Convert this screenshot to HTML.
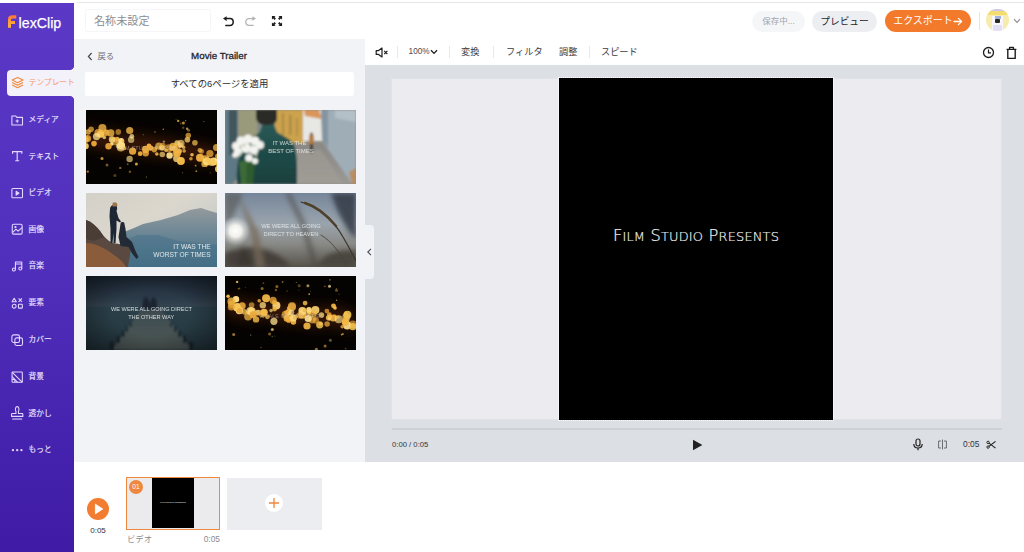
<!DOCTYPE html>
<html lang="ja">
<head>
<meta charset="utf-8">
<title>FlexClip</title>
<style>
*{box-sizing:border-box;margin:0;padding:0}
html,body{width:1024px;height:552px;overflow:hidden;background:#fff;font-family:"Liberation Sans","Noto Sans CJK JP",sans-serif;color:#222}
.abs{position:absolute}
#topline{left:77px;top:0;width:947px;height:3px;background:#fff;border-bottom:1px solid #e6e6e8}
#side{left:0;top:2.7px;width:74px;height:550px;background:linear-gradient(180deg,#5b39c6 0%,#5130bd 45%,#3f1ba5 100%)}
#logo{left:0;top:0;width:74px;height:36px}
.nav{position:absolute;left:0;width:74px;height:26px;color:#e9e2ff;font-size:7.7px;line-height:26px;white-space:nowrap;-webkit-text-stroke:0.15px currentColor}
.nav svg{position:absolute;left:10.6px;top:6.9px;width:12.4px;height:12.4px;overflow:visible}
.nav span{position:absolute;left:28.6px;top:0.3px}
.nav.active{left:7px;width:67px;height:26.6px;line-height:26.6px;background:#f3f1fa;border-radius:4px 0 0 4px;color:#f5a97f}
.nav.active svg{left:3.8px;top:6.4px;width:13.2px;height:13.2px}
.nav.active span{left:21.8px}
#header{left:74px;top:3px;width:950px;height:36px;background:#fff}
#name{left:85px;top:9px;width:126px;height:23px;border:1px solid #f6f6f8;border-radius:2px;font-size:11.1px;line-height:23px;padding-left:8px;color:#8d8d90}
#panel{left:74px;top:39px;width:291px;height:423.4px;background:#f1f3f7}
#editor{left:365px;top:39px;width:659px;height:423.4px;background:#dcdfe3}
#toolbar{left:365px;top:39px;width:659px;height:26px;background:#fff}
#stage{left:392px;top:79px;width:609px;height:339.6px;background:#ececf0;outline:1px dotted rgba(255,255,255,.2)}
#video{left:559px;top:78px;width:274px;height:341.6px;background:#000;outline:1px dotted rgba(255,255,255,.85)}
#timeline{left:74px;top:462px;width:950px;height:90px;background:#fff}
.t{position:absolute;white-space:nowrap}
.pill{border-radius:11px;font-size:8.5px;text-align:center;line-height:21px;white-space:nowrap}
#avatar{left:986px;top:8.5px;width:22.5px;height:22.5px;border-radius:50%;background:#f7ecae;overflow:hidden}
#apply{left:85px;top:72px;width:269px;height:24px;background:#fff;border-radius:2px;text-align:center;font-size:9.4px;line-height:24px;color:#2b2b31}
#handle{left:365px;top:225px;width:8.5px;height:54px;background:#f1f3f7;border-radius:0 4px 4px 0}
.vd{top:46px;width:1px;height:12px;background:#e7e8eb}
.tb{top:46px;font-size:8.6px;line-height:12px;color:#3a3b42}
.tb.j{font-size:9.2px}
#title{left:559px;top:226.4px;width:274px;text-align:center;color:#f2f2f2;font-family:"DejaVu Sans Light","DejaVu Sans","Liberation Sans",sans-serif;font-weight:200;font-size:16.2px;line-height:19px;letter-spacing:0.2px;-webkit-text-stroke:0.2px #f2f2f2}
#title span{font-size:12.9px}
#clip{left:126px;top:477.4px;width:94px;height:52.4px;border:1.5px solid #f0873f;background:#ebebee;overflow:hidden}
.thumb{position:absolute;width:131px;height:74px;background:#222;overflow:hidden}
</style>
</head>
<body>
<div class="abs" id="side">
<svg class="abs" id="logo" viewBox="0 0 74 36"><defs><linearGradient id="lg" x1="0" y1="0" x2="0" y2="1"><stop offset="0" stop-color="#ff6f3f"/><stop offset="0.45" stop-color="#ff9a3a"/><stop offset="1" stop-color="#ffb536"/></linearGradient></defs>
<path d="M8 24.8 V16.2 C8 13.8 9.6 12.2 12 12.2 H16.3 V15.6 H12.6 C11.6 15.6 11 16.2 11 17.2 V18 H15 V21 H11 V24.8 Z" fill="url(#lg)"/>
<text x="18.6" y="24.5" font-family="Liberation Sans, sans-serif" font-size="14.5" fill="#fff" stroke="#fff" stroke-width="0.25" textLength="42.6" lengthAdjust="spacingAndGlyphs">lexClip</text></svg>
<div class="abs" style="left:70px;top:63px;width:4px;height:4px;background:radial-gradient(circle at 0 0,rgba(243,241,250,0) 3.6px,#f3f1fa 4.2px)"></div><div class="abs" style="left:70px;top:93px;width:4px;height:4px;background:radial-gradient(circle at 0 100%,rgba(243,241,250,0) 3.6px,#f3f1fa 4.2px)"></div>
<div class="nav active" style="top:67px"><svg viewBox="0 0 14 14"><g fill="none" stroke="#f08a3c" stroke-width="1.2" stroke-linejoin="round"><path d="M7 1.5 L12.8 4.3 L7 7.1 L1.2 4.3 Z"/><path d="M1.2 7 L7 9.8 L12.8 7"/><path d="M1.2 9.6 L7 12.4 L12.8 9.6"/></g></svg><span>テンプレート</span></div>
<div class="nav" style="top:104.2px"><svg viewBox="0 0 14 14"><g fill="none" stroke="#e3d8ff" stroke-width="1.2" stroke-linejoin="round"><path d="M1 2.2 H5.2 L6.6 3.8 H13 V12.4 H1 Z"/><path d="M5.2 8 H8.8 M7 6.2 V9.8"/></g></svg><span>メディア</span></div>
<div class="nav" style="top:140.7px"><svg viewBox="0 0 14 14"><g fill="none" stroke="#e3d8ff" stroke-width="1.3"><path d="M1.8 4.2 V1.8 H12.2 V4.2 M7 1.8 V12.2 M4.8 12.2 H9.2"/></g></svg><span>テキスト</span></div>
<div class="nav" style="top:177.4px"><svg viewBox="0 0 14 14"><g fill="none" stroke="#e3d8ff" stroke-width="1.2" stroke-linejoin="round"><rect x="1" y="1.8" width="12" height="10.4" rx="1"/><path d="M5.8 4.8 L9 7 L5.8 9.2 Z" fill="#e3d8ff"/></g></svg><span>ビデオ</span></div>
<div class="nav" style="top:213.9px"><svg viewBox="0 0 14 14"><g fill="none" stroke="#e3d8ff" stroke-width="1.2" stroke-linejoin="round"><rect x="1.4" y="1.4" width="11.2" height="11.2" rx="1.6"/><path d="M2 10.6 L5.6 7 L8 9.2 L12.4 5.2"/><circle cx="5" cy="4.6" r="0.7"/></g></svg><span>画像</span></div>
<div class="nav" style="top:250.4px"><svg viewBox="0 0 14 14"><g fill="none" stroke="#e3d8ff" stroke-width="1.2" stroke-linejoin="round"><path d="M5 10.8 V2.2 H12.2 V9.6 M5 4.6 H12.2"/><circle cx="3.3" cy="10.8" r="1.7"/><circle cx="10.5" cy="9.6" r="1.7"/></g></svg><span>音楽</span></div>
<div class="nav" style="top:287.4px"><svg viewBox="0 0 14 14"><g fill="none" stroke="#e3d8ff" stroke-width="1.2" stroke-linejoin="round"><path d="M3.6 1.4 L6 5.4 H1.2 Z"/><path d="M8.6 1.6 L12.4 5.4 M12.4 1.6 L8.6 5.4"/><circle cx="3.6" cy="10.4" r="2.2"/><rect x="8.4" y="8.2" width="4.4" height="4.4" rx="0.8"/></g></svg><span>要素</span></div>
<div class="nav" style="top:324.3px"><svg viewBox="0 0 14 14"><g fill="none" stroke="#e3d8ff" stroke-width="1.2" stroke-linejoin="round"><rect x="1" y="1" width="8.6" height="8.6" rx="2"/><rect x="4.4" y="4.4" width="8.6" height="8.6" rx="2"/></g></svg><span>カバー</span></div>
<div class="nav" style="top:361.2px"><svg viewBox="0 0 14 14"><g fill="none" stroke="#e3d8ff" stroke-width="1.2" stroke-linejoin="round"><rect x="1.2" y="1.2" width="11.6" height="11.6" rx="0.8"/><path d="M1.2 1.2 L12.8 12.8 M1.2 6.4 L7.6 12.8 M4.4 9.6 V12.8 M1.2 9.6 H4.4"/></g></svg><span>背景</span></div>
<div class="nav" style="top:397.7px"><svg viewBox="0 0 14 14"><g fill="none" stroke="#e3d8ff" stroke-width="1.2" stroke-linejoin="round"><path d="M5.6 5 C4.4 3 5 -0.4 7 -0.4 C9 -0.4 9.6 3 8.4 5 V7.4 H12.6 C13.2 7.4 13.4 7.8 13.4 8.4 V10.6 H0.6 V8.4 C0.6 7.8 0.8 7.4 1.4 7.4 H5.6 Z"/><path d="M1.4 13.6 H12.6"/></g></svg><span>透かし</span></div>
<div class="nav" style="top:434.2px"><svg viewBox="0 0 14 14"><g fill="#e3d8ff"><circle cx="2.2" cy="7" r="1.3"/><circle cx="7" cy="7" r="1.3"/><circle cx="11.8" cy="7" r="1.3"/></g></svg><span>もっと</span></div>
</div>
<div class="abs" id="header"></div>
<div class="abs" id="topline"></div>
<div class="abs" id="name">名称未設定</div>
<svg class="abs" style="left:221px;top:15px;width:14px;height:13px" viewBox="0 0 14 13"><path d="M5.6 1.2 L2 3.6 L5.6 6 Z" fill="#1d1d1f"/><path d="M5 3.6 H9 C11.2 3.6 12.2 5.1 12.2 7 C12.2 8.9 11.2 10.4 9 10.4 H4.8" fill="none" stroke="#1d1d1f" stroke-width="1.5" stroke-linecap="round"/></svg>
<svg class="abs" style="left:244px;top:15px;width:14px;height:13px" viewBox="0 0 14 13"><path d="M8.4 1.2 L12 3.6 L8.4 6 Z" fill="#b4b4b8"/><path d="M9 3.6 H5 C2.8 3.6 1.8 5.1 1.8 7 C1.8 8.9 2.8 10.4 5 10.4 H9.2" fill="none" stroke="#b4b4b8" stroke-width="1.3" stroke-linecap="round"/></svg>
<svg class="abs" style="left:271.4px;top:15.4px;width:12px;height:12px" viewBox="0 0 13 13"><g fill="#1d1d1f"><path d="M1 1 H5 L3.7 2.3 L5.3 3.9 L3.9 5.3 L2.3 3.7 L1 5 Z"/><path d="M12 1 V5 L10.7 3.7 L9.1 5.3 L7.7 3.9 L9.3 2.3 L8 1 Z"/><path d="M1 12 V8 L2.3 9.3 L3.9 7.7 L5.3 9.1 L3.7 10.7 L5 12 Z"/><path d="M12 12 H8 L9.3 10.7 L7.7 9.1 L9.1 7.7 L10.7 9.3 L12 8 Z"/></g></svg>

<div class="abs pill" style="left:752px;top:11px;width:53px;height:21px;background:#f5f6f8;color:#a3a4ab">保存中...</div>
<div class="abs pill" style="left:812px;top:11px;width:65px;height:21px;background:#eceef2;color:#26262b;font-size:9.7px">プレビュー</div>
<div class="abs pill" style="left:885px;top:10px;width:86px;height:22px;background:#f47a2b;color:#fff;font-size:10px;padding-right:10px">エクスポート<svg class="abs" style="left:68px;top:6.5px;width:10px;height:9px" viewBox="0 0 10 9"><path d="M1 4.5 H8.4 M5.4 1.4 L8.6 4.5 L5.4 7.6" fill="none" stroke="#fff" stroke-width="1.3" stroke-linecap="round" stroke-linejoin="round"/></svg></div>
<div class="abs" style="left:979px;top:12px;width:1px;height:18px;background:#e4e4e8"></div>
<div class="abs" id="avatar"><div class="abs" style="left:0;top:0;width:23px;height:3px;background:#cfc6ee"></div><div class="abs" style="left:0;top:2.5px;width:23px;height:4px;background:#f4dc6e"></div><div class="abs" style="left:6px;top:7px;width:11px;height:16px;background:#f7f6fb"></div><div class="abs" style="left:8.5px;top:7.5px;width:6px;height:3px;background:#9fb4e0"></div><div class="abs" style="left:9px;top:10px;width:5px;height:4.5px;background:#2a2622;border-radius:1px"></div><div class="abs" style="left:7px;top:16px;width:9px;height:7px;background:#e3def3"></div></div>
<svg class="abs" style="left:1013px;top:18px;width:8px;height:6px" viewBox="0 0 8 6"><path d="M1 1.2 L4 4.4 L7 1.2" fill="none" stroke="#8a8a90" stroke-width="1.1"/></svg>

<div class="abs" id="panel"></div>
<svg class="abs" style="left:87px;top:52px;width:6px;height:9px" viewBox="0 0 6 9"><path d="M4.6 1 L1.4 4.5 L4.6 8" fill="none" stroke="#4a4a52" stroke-width="1.2"/></svg>
<div class="t" style="left:97.5px;top:50px;font-size:8.4px;line-height:12px;color:#6d6e78">戻る</div>
<div class="t" id="mt" style="left:169px;top:49px;width:100px;text-align:center;font-size:9.75px;line-height:14px;color:#24242a;-webkit-text-stroke:0.3px #24242a">Movie Trailer</div>
<div class="abs" id="apply">すべての6ページを適用</div>
<div class="thumb" id="th1" style="left:86px;top:110px"><svg viewBox="0 0 131 74" width="131" height="74"><defs><filter id="b1" filterUnits="userSpaceOnUse" x="-10" y="-10" width="151" height="94"><feGaussianBlur stdDeviation="0.55"/></filter><filter id="g1" filterUnits="userSpaceOnUse" x="-30" y="-30" width="191" height="134"><feGaussianBlur stdDeviation="7"/></filter></defs><rect width="131" height="74" fill="#050302"/><g filter="url(#g1)" opacity="0.5"><path d="M-2 26 L40 33" stroke="#7a300c" stroke-width="16" fill="none"/><path d="M40 33 L95 40" stroke="#7a300c" stroke-width="16" fill="none"/><path d="M95 40 L133 47" stroke="#7a300c" stroke-width="16" fill="none"/></g><g filter="url(#b1)"><circle cx="5.1" cy="19.3" r="2.8" fill="#f7bd4a" opacity="0.65"/><circle cx="15.3" cy="21.2" r="1.8" fill="#f7bd4a" opacity="0.80"/><circle cx="12.4" cy="22.9" r="4.0" fill="#f0b040" opacity="0.78"/><circle cx="31.1" cy="30.2" r="2.8" fill="#f6c553" opacity="0.61"/><circle cx="28.4" cy="31.2" r="4.0" fill="#e9a63a" opacity="0.69"/><circle cx="26.0" cy="29.5" r="3.2" fill="#ffd978" opacity="0.82"/><circle cx="8.0" cy="33.6" r="2.8" fill="#e9a63a" opacity="0.97"/><circle cx="31.2" cy="29.1" r="2.4" fill="#f0b040" opacity="0.85"/><circle cx="35.1" cy="35.4" r="4.0" fill="#ffe390" opacity="0.99"/><circle cx="34.8" cy="37.4" r="4.0" fill="#ffd978" opacity="0.68"/><circle cx="24.8" cy="22.9" r="3.6" fill="#f7bd4a" opacity="0.76"/><circle cx="-0.4" cy="36.1" r="3.2" fill="#ffd978" opacity="0.87"/><circle cx="20.4" cy="22.0" r="2.8" fill="#f0b040" opacity="0.63"/><circle cx="19.7" cy="23.0" r="3.2" fill="#f0b040" opacity="0.75"/><circle cx="1.5" cy="28.5" r="3.6" fill="#e9a63a" opacity="0.84"/><circle cx="25.7" cy="34.0" r="1.8" fill="#ffe390" opacity="0.91"/><circle cx="35.2" cy="30.8" r="2.8" fill="#ffe390" opacity="0.98"/><circle cx="14.7" cy="24.1" r="3.6" fill="#f6c553" opacity="0.98"/><circle cx="16.4" cy="18.0" r="4.0" fill="#f3b744" opacity="0.80"/><circle cx="18.3" cy="27.5" r="1.8" fill="#ffd978" opacity="0.79"/><circle cx="22.5" cy="36.2" r="3.2" fill="#e9a63a" opacity="0.93"/><circle cx="10.5" cy="26.6" r="3.6" fill="#ffe390" opacity="0.73"/><circle cx="-0.7" cy="29.6" r="3.6" fill="#f6c553" opacity="0.67"/><circle cx="32.3" cy="21.9" r="2.8" fill="#f0b040" opacity="0.61"/><circle cx="2.1" cy="22.0" r="2.8" fill="#f6c553" opacity="0.70"/><circle cx="32.0" cy="35.8" r="2.4" fill="#ffe390" opacity="0.66"/><circle cx="91.2" cy="33.0" r="2.8" fill="#ffd978" opacity="0.78"/><circle cx="68.3" cy="39.6" r="2.8" fill="#f3b744" opacity="0.77"/><circle cx="54.2" cy="43.7" r="2.4" fill="#e9a63a" opacity="0.99"/><circle cx="85.2" cy="38.9" r="2.4" fill="#f3b744" opacity="0.61"/><circle cx="62.9" cy="35.9" r="2.4" fill="#f0b040" opacity="0.99"/><circle cx="82.8" cy="38.2" r="4.0" fill="#f0b040" opacity="0.61"/><circle cx="70.8" cy="44.0" r="1.8" fill="#f3b744" opacity="0.89"/><circle cx="94.1" cy="36.5" r="1.8" fill="#ffd978" opacity="0.72"/><circle cx="79.9" cy="40.3" r="1.8" fill="#f7bd4a" opacity="0.82"/><circle cx="43.7" cy="20.5" r="3.6" fill="#f7bd4a" opacity="0.78"/><circle cx="90.0" cy="37.7" r="3.6" fill="#f3b744" opacity="0.61"/><circle cx="59.7" cy="43.3" r="3.2" fill="#e9a63a" opacity="0.84"/><circle cx="45.1" cy="29.8" r="3.2" fill="#ffe390" opacity="0.61"/><circle cx="88.2" cy="38.5" r="2.4" fill="#f7bd4a" opacity="0.94"/><circle cx="94.6" cy="35.0" r="2.4" fill="#f6c553" opacity="0.71"/><circle cx="87.3" cy="36.8" r="4.0" fill="#f7bd4a" opacity="0.81"/><circle cx="94.4" cy="48.7" r="1.8" fill="#f3b744" opacity="0.65"/><circle cx="90.7" cy="48.4" r="3.6" fill="#ffd978" opacity="0.80"/><circle cx="59.6" cy="39.4" r="3.6" fill="#f0b040" opacity="0.91"/><circle cx="90.1" cy="44.4" r="1.8" fill="#e9a63a" opacity="0.73"/><circle cx="45.8" cy="26.3" r="2.4" fill="#ffe390" opacity="0.74"/><circle cx="72.8" cy="36.1" r="3.6" fill="#f6c553" opacity="0.69"/><circle cx="91.5" cy="43.1" r="3.6" fill="#e9a63a" opacity="0.97"/><circle cx="89.7" cy="40.3" r="2.8" fill="#f0b040" opacity="0.60"/><circle cx="38.4" cy="38.4" r="1.8" fill="#f7bd4a" opacity="0.68"/><circle cx="93.7" cy="41.2" r="2.4" fill="#f3b744" opacity="0.87"/><circle cx="83.6" cy="45.5" r="3.2" fill="#ffe390" opacity="0.92"/><circle cx="89.7" cy="43.4" r="3.2" fill="#f3b744" opacity="0.73"/><circle cx="76.1" cy="37.8" r="2.8" fill="#ffd978" opacity="0.89"/><circle cx="64.5" cy="38.0" r="2.8" fill="#e9a63a" opacity="0.99"/><circle cx="46.6" cy="41.2" r="3.6" fill="#e9a63a" opacity="0.95"/><circle cx="76.3" cy="44.5" r="2.8" fill="#ffd978" opacity="0.68"/><circle cx="43.6" cy="49.0" r="3.2" fill="#ffe390" opacity="0.64"/><circle cx="76.8" cy="35.5" r="2.8" fill="#f3b744" opacity="0.62"/><circle cx="108.9" cy="32.7" r="2.8" fill="#f6c553" opacity="0.70"/><circle cx="113.9" cy="40.3" r="2.4" fill="#f7bd4a" opacity="0.69"/><circle cx="106.0" cy="44.8" r="1.8" fill="#f6c553" opacity="0.89"/><circle cx="118.5" cy="53.9" r="3.2" fill="#f7bd4a" opacity="0.79"/><circle cx="98.2" cy="41.0" r="1.8" fill="#f0b040" opacity="0.80"/><circle cx="102.3" cy="25.5" r="2.8" fill="#f0b040" opacity="0.72"/><circle cx="115.6" cy="41.4" r="2.4" fill="#f0b040" opacity="0.66"/><circle cx="94.9" cy="51.1" r="4.0" fill="#f7bd4a" opacity="0.96"/><circle cx="131.9" cy="46.3" r="2.8" fill="#f3b744" opacity="0.77"/><circle cx="97.6" cy="37.2" r="1.8" fill="#e9a63a" opacity="0.87"/><circle cx="123.9" cy="43.6" r="3.6" fill="#e9a63a" opacity="0.78"/><circle cx="127.6" cy="51.4" r="4.0" fill="#ffe390" opacity="0.97"/><circle cx="95.0" cy="33.4" r="3.6" fill="#ffd978" opacity="0.65"/><circle cx="132.0" cy="53.9" r="2.4" fill="#f3b744" opacity="0.84"/><circle cx="114.0" cy="47.7" r="4.0" fill="#f0b040" opacity="0.97"/><circle cx="119.5" cy="49.2" r="4.0" fill="#f3b744" opacity="0.79"/><circle cx="121.0" cy="51.5" r="4.0" fill="#ffd978" opacity="0.97"/><circle cx="132.6" cy="59.0" r="3.6" fill="#ffd978" opacity="0.86"/><circle cx="101.4" cy="29.8" r="2.8" fill="#ffd978" opacity="0.72"/><circle cx="125.6" cy="52.1" r="4.0" fill="#f6c553" opacity="0.79"/><circle cx="130.6" cy="37.5" r="3.6" fill="#f3b744" opacity="0.75"/><circle cx="104.9" cy="48.7" r="1.8" fill="#e9a63a" opacity="0.80"/><circle cx="121.2" cy="50.4" r="2.4" fill="#f6c553" opacity="0.82"/><circle cx="94.8" cy="13.5" r="0.9" fill="#f0b040" opacity="0.35"/><circle cx="99.6" cy="10.7" r="0.7" fill="#f7bd4a" opacity="0.61"/><circle cx="117.9" cy="11.5" r="0.5" fill="#e9a63a" opacity="0.73"/><circle cx="101.3" cy="29.6" r="1.2" fill="#e9a63a" opacity="0.38"/><circle cx="97.2" cy="17.7" r="1.2" fill="#f3b744" opacity="0.36"/><circle cx="90.1" cy="9.2" r="0.5" fill="#f0b040" opacity="0.45"/><circle cx="100.2" cy="27.3" r="0.5" fill="#f3b744" opacity="0.56"/><circle cx="97.4" cy="13.0" r="1.5" fill="#f3b744" opacity="0.72"/><circle cx="102.6" cy="20.3" r="1.5" fill="#f3b744" opacity="0.44"/><circle cx="92.2" cy="10.9" r="1.2" fill="#f7bd4a" opacity="0.73"/><circle cx="41.7" cy="54.2" r="0.9" fill="#e9a63a" opacity="0.51"/><circle cx="43.9" cy="61.8" r="1.2" fill="#f3b744" opacity="0.44"/><circle cx="60.4" cy="67.1" r="0.5" fill="#ffe390" opacity="0.67"/><circle cx="-9.7" cy="52.2" r="0.7" fill="#f6c553" opacity="0.55"/><circle cx="21.0" cy="55.0" r="1.5" fill="#f0b040" opacity="0.48"/><circle cx="34.3" cy="57.9" r="1.2" fill="#f0b040" opacity="0.52"/><circle cx="28.9" cy="65.6" r="1.5" fill="#e9a63a" opacity="0.36"/><circle cx="50.4" cy="54.1" r="1.5" fill="#f6c553" opacity="0.80"/><circle cx="16.0" cy="48.4" r="1.5" fill="#f3b744" opacity="0.79"/><circle cx="1.8" cy="61.6" r="1.2" fill="#f0b040" opacity="0.66"/><circle cx="101.1" cy="18.8" r="1.2" fill="#ffe390" opacity="0.63"/><circle cx="77.9" cy="31.6" r="1.2" fill="#ffe390" opacity="0.51"/><circle cx="37.1" cy="31.1" r="1.5" fill="#f0b040" opacity="0.65"/><circle cx="77.3" cy="19.2" r="0.7" fill="#f0b040" opacity="0.78"/><circle cx="69.0" cy="22.0" r="0.7" fill="#f0b040" opacity="0.69"/><circle cx="57.3" cy="24.8" r="0.7" fill="#f7bd4a" opacity="0.34"/><circle cx="110.3" cy="61.2" r="0.9" fill="#f7bd4a" opacity="0.65"/><circle cx="120.6" cy="56.6" r="0.7" fill="#e9a63a" opacity="0.72"/><circle cx="96.6" cy="62.7" r="0.5" fill="#ffd978" opacity="0.56"/><circle cx="109.6" cy="55.7" r="0.9" fill="#f6c553" opacity="0.63"/><circle cx="124.2" cy="62.9" r="0.7" fill="#f0b040" opacity="0.35"/></g><text x="65" y="40" text-anchor="middle" font-family="Liberation Sans,sans-serif" font-size="5.4" fill="#d9cfc0" opacity="0.55" letter-spacing="0.2">FILM STUDIO PRESENTS</text></svg></div>
<div class="thumb" id="th2" style="left:225px;top:110px"><svg viewBox="0 0 131 74" width="131" height="74"><defs><filter id="b2"><feGaussianBlur stdDeviation="0.8"/></filter><linearGradient id="gr2" x1="0" y1="0" x2="0" y2="1"><stop offset="0" stop-color="#8b8985"/><stop offset="1" stop-color="#9b9893"/></linearGradient><linearGradient id="jk2" x1="0" y1="0" x2="0" y2="1"><stop offset="0" stop-color="#2b5b57"/><stop offset="0.5" stop-color="#1f4b48"/><stop offset="1" stop-color="#1b403f"/></linearGradient></defs><rect width="131" height="74" fill="#8d8c88"/><g filter="url(#b2)"><path d="M0 0 H34 V40 L8 74 H0 Z" fill="#5f7984"/><path d="M13 0 H33 V38 L13 52 Z" fill="#99997c"/><path d="M4 0 H12 V40 L4 46 Z" fill="#41545c"/><rect x="50" y="0" width="30" height="33" fill="#cca24d"/><rect x="57" y="3" width="2" height="22" fill="#a98a45"/><rect x="64" y="5" width="2.4" height="20" fill="#a98a45"/><rect x="71" y="8" width="2" height="18" fill="#b08f48"/><path d="M78 0 H98 V31 H78 Z" fill="#e7e7e4"/><path d="M79 0 L94 0 L97 9 L80 6 Z" fill="#d9955a"/><path d="M96 0 H131 V74 H127 L98 32 Z" fill="#9fadb7"/><path d="M96 0 H103 L103 38 L97 30 Z" fill="#8495a0"/><path d="M110 0 H131 V12 L110 8 Z" fill="#b4c0c8"/><path d="M8 74 L40 34 H98 L127 74 Z" fill="url(#gr2)"/><path d="M70 40 H96 L118 74 H72 Z" fill="#a29e98" opacity="0.6"/><path d="M124 62 L131 58 V74 H127 Z" fill="#b98d62"/><rect x="84" y="25" width="5" height="10" rx="1.5" fill="#b57b40"/><rect x="85" y="34" width="3" height="9" fill="#3e3630"/><circle cx="86.5" cy="24" r="1.6" fill="#6a4a36"/><path d="M12 74 C11 58 13 44 20 33 C26 27 30 26 35 22 L38 12 H48 L52 22 C58 26 64 28 68 33 C73 42 72 60 72 74 Z" fill="url(#jk2)"/><path d="M31 0 H52 V8 C52 13 48 15 42 15 C36 15 32 13 31 8 Z" fill="#2b2925"/><path d="M19 50 L30 50 L28 74 L18 74 Z" fill="#2f5c2e"/><path d="M14 52 L22 50 L21 74 L16 74 Z" fill="#3d6b38"/><g fill="#f3f3ef"><circle cx="11" cy="36" r="4"/><circle cx="16" cy="31" r="4.5"/><circle cx="23" cy="29" r="4.5"/><circle cx="30" cy="31" r="4.5"/><circle cx="35" cy="35" r="4"/><circle cx="13" cy="42" r="4"/><circle cx="21" cy="38" r="5"/><circle cx="29" cy="40" r="4.5"/><circle cx="24" cy="48" r="3.8"/><circle cx="30" cy="51" r="3"/><circle cx="10" cy="45" r="2.6"/></g><g fill="#c3c8b8"><circle cx="19" cy="35" r="1.5"/><circle cx="27" cy="35" r="1.5"/><circle cx="31" cy="45" r="1.4"/><circle cx="15" cy="44" r="1.3"/><circle cx="24" cy="43" r="1.2"/></g></g><g font-family="Liberation Sans,sans-serif" font-size="6" fill="#e6ebea" opacity="0.85" text-anchor="middle"><text x="64.5" y="35">IT WAS THE</text><text x="66" y="43.2">BEST OF TIMES</text></g></svg></div>
<div class="thumb" id="th3" style="left:86px;top:193px"><svg viewBox="0 0 131 74" width="131" height="74"><defs><filter id="b3"><feGaussianBlur stdDeviation="0.7"/></filter><filter id="b3b"><feGaussianBlur stdDeviation="2.5"/></filter><linearGradient id="sk3" x1="0" y1="0" x2="1" y2="1"><stop offset="0" stop-color="#d3d0c8"/><stop offset="0.4" stop-color="#dbd7cd"/><stop offset="1" stop-color="#b9c3c6"/></linearGradient><linearGradient id="m3" x1="0" y1="0" x2="0" y2="1"><stop offset="0" stop-color="#939a9c"/><stop offset="0.4" stop-color="#6f8896"/><stop offset="1" stop-color="#3d6a81"/></linearGradient></defs><rect width="131" height="74" fill="url(#sk3)"/><g filter="url(#b3)"><path d="M38 74 L38 39 L48 35 L57 31 L75 27 L92 22 L104 17 L115 15 L124 18 L131 20 V74 Z" fill="url(#m3)"/><path d="M34 74 L36 48 L52 42 L72 42 L92 48 L131 52 V74 Z" fill="#47718a" opacity="0.55"/><path d="M0 27 C6 29 10 33 14 38 C18 44 22 48 27 50 L45 53 C45 60 43 66 42 74 H0 Z" fill="#5a4a3f"/><path d="M0 50 C10 50 20 56 28 62 C34 66 38 70 40 74 H0 Z" fill="#8b5c3b"/><path d="M0 27 C6 29 10 33 14 38 L18 44 L8 48 L0 46 Z" fill="#4a3e36"/><path d="M24 16 C24 13 27 11 29.5 12 C31.5 13 31.5 16 30.5 18 L32.5 25 L35 28.5 L34 29.5 L30.5 27.5 L30.5 36 L29.5 50 L27.5 50 L27.5 40 L26.5 50 L24.5 50 L24.5 36 L23.5 23 Z" fill="#1f2735"/><path d="M26.5 10 C28.5 8.4 31.5 9.4 31.5 12.4 L29.5 13.4 L26.5 13.4 Z" fill="#a0764f"/><path d="M34.5 31 C34.5 28.4 38.5 28.4 38.5 31 L39.5 36 L40.5 44 L46 49 L49.5 58 L52.5 64 L50.5 66 L46.5 61 L42.5 54 L34.5 53 L32.5 44 Z" fill="#232a36"/></g><g font-family="Liberation Sans,sans-serif" font-size="6.6" fill="#eef2f2" opacity="0.92" text-anchor="end"><text x="124.6" y="56.4">IT WAS THE</text><text x="124.6" y="64.2">WORST OF TIMES</text></g></svg></div>
<div class="thumb" id="th4" style="left:225px;top:193px"><svg viewBox="0 0 131 74" width="131" height="74"><defs><filter id="b4"><feGaussianBlur stdDeviation="2.6"/></filter><filter id="b4s"><feGaussianBlur stdDeviation="0.6"/></filter><linearGradient id="s4" x1="0" y1="0" x2="0" y2="1"><stop offset="0" stop-color="#76869a"/><stop offset="0.42" stop-color="#9aa4ad"/><stop offset="0.68" stop-color="#8a8b88"/><stop offset="1" stop-color="#57534b"/></linearGradient><radialGradient id="sun4" cx="0.5" cy="0.5" r="0.5"><stop offset="0" stop-color="#fff"/><stop offset="0.4" stop-color="#f6f5f0" stop-opacity="0.95"/><stop offset="1" stop-color="#c9cccb" stop-opacity="0"/></radialGradient></defs><rect width="131" height="74" fill="url(#s4)"/><g filter="url(#b4)"><path d="M0 74 V60 C16 54 30 52 44 58 C54 62 60 66 66 74 Z" fill="#45413a"/><path d="M92 74 C98 62 110 56 131 58 V74 Z" fill="#4a4740"/><path d="M13 2 L33 38 L40 74 L31 74 L26 40 Z" fill="#75695a" opacity="0.8"/><path d="M66 0 L80 28 L94 74 L87 74 L76 34 L60 0 Z" fill="#4a4844" opacity="0.55"/><path d="M106 0 H131 V46 C122 38 112 20 106 0 Z" fill="#333a44" opacity="0.85"/><path d="M0 0 H18 L8 24 L0 30 Z" fill="#55554f" opacity="0.6"/><path d="M18 52 L30 74 L10 74 Z" fill="#3a372f" opacity="0.8"/></g><circle cx="10.5" cy="38" r="15" fill="url(#sun4)"/><g filter="url(#b4s)" fill="none" stroke="#3a3328" stroke-linecap="round"><path d="M76 9 C92 13 108 26 118 44 C124 54 128 62 131 68" stroke-width="1.2"/><path d="M80 10 C90 13 100 20 111 33" stroke-width="2.6" stroke="#4f412c"/><path d="M96 42 C106 48 116 60 122 74" stroke-width="0.9" stroke="#4a4438"/></g><g font-family="Liberation Sans,sans-serif" font-size="5.7" fill="#e9ecee" opacity="0.85" text-anchor="middle"><text x="66" y="35.4">WE WERE ALL GOING</text><text x="66" y="42.6">DIRECT TO HEAVEN</text></g></svg></div>
<div class="thumb" id="th5" style="left:86px;top:276px"><svg viewBox="0 0 131 74" width="131" height="74"><defs><filter id="b5"><feGaussianBlur stdDeviation="0.9"/></filter><linearGradient id="s5" x1="0" y1="0" x2="0" y2="1"><stop offset="0" stop-color="#1d2937"/><stop offset="0.3" stop-color="#2c3b4a"/><stop offset="0.4" stop-color="#33444f"/><stop offset="0.43" stop-color="#2a3f49"/><stop offset="1" stop-color="#25373f"/></linearGradient><linearGradient id="p5" x1="0" y1="0" x2="0" y2="1"><stop offset="0" stop-color="#3c4b50"/><stop offset="1" stop-color="#4e5855"/></linearGradient><radialGradient id="v5" cx="0.5" cy="0.5" r="0.75"><stop offset="0.4" stop-color="#000" stop-opacity="0"/><stop offset="1" stop-color="#000" stop-opacity="0.55"/></radialGradient></defs><rect width="131" height="74" fill="url(#s5)"/><g filter="url(#b5)"><path d="M56 32 L74 32 L106 74 L26 74 Z" fill="url(#p5)"/><rect x="24" y="66" width="4" height="8" fill="#18222a"/><rect x="31" y="60" width="3" height="7" fill="#18222a"/><rect x="36" y="55" width="2.5" height="6" fill="#18222a"/><rect x="40" y="51" width="2" height="5" fill="#18222a"/><rect x="44" y="47" width="1.6" height="4" fill="#18222a"/><rect x="103" y="66" width="4" height="8" fill="#18222a"/><rect x="97" y="60" width="3" height="7" fill="#18222a"/><rect x="92" y="55" width="2.5" height="6" fill="#18222a"/><rect x="88" y="51" width="2" height="5" fill="#18222a"/><rect x="84" y="47" width="1.6" height="4" fill="#18222a"/><path d="M58 23 C58 20.5 62 20.5 62 23 L63.4 26 V34 H56.6 V26 Z" fill="#1a242d"/><path d="M65.5 23.5 C65.5 21 69.5 21 69.5 23.5 L71 26.5 V34 H64 V26.5 Z" fill="#1a242d"/></g><rect width="131" height="74" fill="url(#v5)"/><g font-family="Liberation Sans,sans-serif" font-size="5.6" fill="#e4e8ea" opacity="0.9" text-anchor="middle"><text x="65.5" y="35.4">WE WERE ALL GOING DIRECT</text><text x="65.2" y="42.6">THE OTHER WAY</text></g></svg></div>
<div class="thumb" id="th6" style="left:225px;top:276px"><svg viewBox="0 0 131 74" width="131" height="74"><defs><filter id="b6" filterUnits="userSpaceOnUse" x="-10" y="-10" width="151" height="94"><feGaussianBlur stdDeviation="0.55"/></filter><filter id="g6" filterUnits="userSpaceOnUse" x="-30" y="-30" width="191" height="134"><feGaussianBlur stdDeviation="7"/></filter></defs><rect width="131" height="74" fill="#050302"/><g filter="url(#g6)" opacity="0.5"><path d="M2 30 L32 36" stroke="#7a300c" stroke-width="16" fill="none"/><path d="M34 32 L70 40" stroke="#7a300c" stroke-width="16" fill="none"/><path d="M66 36 L100 44" stroke="#7a300c" stroke-width="16" fill="none"/><path d="M98 38 L130 46" stroke="#7a300c" stroke-width="16" fill="none"/></g><g filter="url(#b6)"><circle cx="26.6" cy="29.1" r="2.8" fill="#f3b744" opacity="0.61"/><circle cx="19.4" cy="35.7" r="2.8" fill="#f6c553" opacity="0.73"/><circle cx="11.0" cy="23.2" r="3.2" fill="#ffe390" opacity="0.96"/><circle cx="23.1" cy="40.6" r="4.0" fill="#f7bd4a" opacity="0.71"/><circle cx="21.6" cy="36.7" r="1.8" fill="#e9a63a" opacity="0.74"/><circle cx="25.5" cy="35.7" r="2.4" fill="#f7bd4a" opacity="0.88"/><circle cx="12.6" cy="29.5" r="2.4" fill="#ffd978" opacity="0.93"/><circle cx="17.1" cy="29.8" r="3.6" fill="#f0b040" opacity="0.86"/><circle cx="25.4" cy="35.1" r="4.0" fill="#ffe390" opacity="0.74"/><circle cx="14.4" cy="34.7" r="3.6" fill="#ffe390" opacity="0.95"/><circle cx="7.1" cy="28.5" r="4.0" fill="#e9a63a" opacity="0.68"/><circle cx="6.4" cy="25.4" r="4.0" fill="#f3b744" opacity="0.81"/><circle cx="26.7" cy="35.2" r="4.0" fill="#ffd978" opacity="0.85"/><circle cx="12.0" cy="31.5" r="4.0" fill="#f6c553" opacity="1.00"/><circle cx="3.1" cy="20.2" r="1.8" fill="#f3b744" opacity="0.99"/><circle cx="27.9" cy="38.8" r="3.2" fill="#f7bd4a" opacity="0.78"/><circle cx="14.8" cy="35.0" r="2.8" fill="#e9a63a" opacity="0.88"/><circle cx="31.0" cy="43.4" r="3.2" fill="#f7bd4a" opacity="0.80"/><circle cx="32.8" cy="36.6" r="2.8" fill="#ffd978" opacity="0.84"/><circle cx="6.3" cy="31.0" r="3.6" fill="#e9a63a" opacity="0.70"/><circle cx="28.3" cy="38.6" r="3.6" fill="#e9a63a" opacity="0.79"/><circle cx="51.4" cy="29.6" r="4.0" fill="#ffd978" opacity="0.92"/><circle cx="48.9" cy="45.3" r="3.6" fill="#ffe390" opacity="0.75"/><circle cx="41.1" cy="22.3" r="4.0" fill="#f7bd4a" opacity="0.92"/><circle cx="46.1" cy="34.6" r="1.8" fill="#ffe390" opacity="0.67"/><circle cx="63.7" cy="43.9" r="2.8" fill="#e9a63a" opacity="0.99"/><circle cx="65.6" cy="40.2" r="2.8" fill="#e9a63a" opacity="0.85"/><circle cx="63.6" cy="32.1" r="1.8" fill="#f6c553" opacity="0.79"/><circle cx="49.6" cy="33.0" r="2.4" fill="#f3b744" opacity="0.84"/><circle cx="34.2" cy="24.7" r="1.8" fill="#e9a63a" opacity="0.86"/><circle cx="60.4" cy="38.4" r="3.6" fill="#f7bd4a" opacity="0.65"/><circle cx="68.4" cy="46.0" r="2.8" fill="#f0b040" opacity="0.96"/><circle cx="49.4" cy="26.5" r="2.4" fill="#f3b744" opacity="0.93"/><circle cx="64.3" cy="42.7" r="3.2" fill="#e9a63a" opacity="0.82"/><circle cx="62.1" cy="41.5" r="2.8" fill="#f6c553" opacity="0.71"/><circle cx="37.8" cy="29.2" r="3.2" fill="#ffd978" opacity="0.77"/><circle cx="37.5" cy="37.4" r="4.0" fill="#f0b040" opacity="0.70"/><circle cx="35.8" cy="37.0" r="1.8" fill="#f0b040" opacity="0.98"/><circle cx="63.8" cy="35.5" r="2.8" fill="#f3b744" opacity="0.95"/><circle cx="61.8" cy="42.4" r="3.2" fill="#f0b040" opacity="0.90"/><circle cx="38.3" cy="35.6" r="1.8" fill="#f0b040" opacity="0.67"/><circle cx="39.2" cy="36.3" r="3.6" fill="#f7bd4a" opacity="0.94"/><circle cx="42.4" cy="40.8" r="2.4" fill="#f3b744" opacity="0.77"/><circle cx="63.2" cy="37.8" r="1.8" fill="#ffe390" opacity="0.91"/><circle cx="48.1" cy="24.3" r="3.6" fill="#e9a63a" opacity="0.78"/><circle cx="61.5" cy="36.7" r="2.4" fill="#f0b040" opacity="0.89"/><circle cx="84.4" cy="36.0" r="2.4" fill="#f3b744" opacity="0.99"/><circle cx="89.9" cy="43.1" r="1.8" fill="#f7bd4a" opacity="0.62"/><circle cx="66.9" cy="30.9" r="4.0" fill="#f6c553" opacity="0.75"/><circle cx="68.3" cy="42.0" r="3.6" fill="#ffd978" opacity="0.88"/><circle cx="70.9" cy="40.1" r="1.8" fill="#f0b040" opacity="0.67"/><circle cx="83.1" cy="37.3" r="2.4" fill="#f6c553" opacity="0.62"/><circle cx="90.4" cy="34.1" r="4.0" fill="#ffd978" opacity="0.88"/><circle cx="82.0" cy="50.0" r="3.6" fill="#f3b744" opacity="0.92"/><circle cx="77.3" cy="38.8" r="4.0" fill="#f0b040" opacity="0.90"/><circle cx="94.7" cy="48.8" r="3.6" fill="#f6c553" opacity="0.84"/><circle cx="77.9" cy="35.2" r="1.8" fill="#f0b040" opacity="0.74"/><circle cx="95.6" cy="47.7" r="1.8" fill="#f6c553" opacity="0.74"/><circle cx="66.4" cy="36.2" r="2.8" fill="#ffe390" opacity="0.64"/><circle cx="87.0" cy="43.8" r="3.6" fill="#f0b040" opacity="0.67"/><circle cx="77.4" cy="35.1" r="4.0" fill="#ffd978" opacity="0.93"/><circle cx="74.5" cy="39.4" r="3.2" fill="#f3b744" opacity="0.64"/><circle cx="88.2" cy="37.4" r="3.6" fill="#f3b744" opacity="0.66"/><circle cx="83.2" cy="42.5" r="3.6" fill="#ffe390" opacity="0.91"/><circle cx="90.8" cy="44.4" r="3.2" fill="#e9a63a" opacity="0.66"/><circle cx="96.4" cy="39.0" r="2.8" fill="#ffd978" opacity="0.73"/><circle cx="79.5" cy="34.8" r="1.8" fill="#f3b744" opacity="0.91"/><circle cx="67.0" cy="30.1" r="4.0" fill="#e9a63a" opacity="0.64"/><circle cx="80.1" cy="27.1" r="2.4" fill="#f6c553" opacity="0.81"/><circle cx="84.0" cy="33.9" r="2.8" fill="#ffd978" opacity="0.95"/><circle cx="122.4" cy="38.7" r="4.0" fill="#f6c553" opacity="0.87"/><circle cx="108.3" cy="42.0" r="3.6" fill="#f3b744" opacity="0.89"/><circle cx="121.6" cy="44.2" r="1.8" fill="#f7bd4a" opacity="0.63"/><circle cx="120.3" cy="46.9" r="2.4" fill="#f7bd4a" opacity="0.99"/><circle cx="127.8" cy="48.5" r="4.0" fill="#e9a63a" opacity="0.65"/><circle cx="120.9" cy="44.6" r="3.6" fill="#f7bd4a" opacity="0.65"/><circle cx="103.7" cy="41.8" r="2.8" fill="#f6c553" opacity="0.85"/><circle cx="109.9" cy="40.3" r="1.8" fill="#f0b040" opacity="0.79"/><circle cx="113.7" cy="43.3" r="4.0" fill="#ffe390" opacity="0.64"/><circle cx="108.5" cy="29.8" r="2.4" fill="#f3b744" opacity="0.93"/><circle cx="110.0" cy="31.9" r="1.8" fill="#f7bd4a" opacity="0.98"/><circle cx="104.3" cy="38.7" r="2.4" fill="#e9a63a" opacity="0.87"/><circle cx="105.0" cy="40.9" r="2.4" fill="#f7bd4a" opacity="0.92"/><circle cx="102.1" cy="48.0" r="2.8" fill="#f0b040" opacity="0.72"/><circle cx="122.2" cy="49.6" r="4.0" fill="#ffe390" opacity="0.91"/><circle cx="120.8" cy="37.5" r="1.8" fill="#f7bd4a" opacity="0.81"/><circle cx="113.0" cy="41.2" r="1.8" fill="#f7bd4a" opacity="0.73"/><circle cx="104.4" cy="42.7" r="1.8" fill="#ffd978" opacity="0.71"/><circle cx="121.3" cy="41.0" r="4.0" fill="#f6c553" opacity="0.67"/><circle cx="101.9" cy="35.1" r="2.4" fill="#e9a63a" opacity="0.74"/><circle cx="127.8" cy="50.7" r="3.6" fill="#f6c553" opacity="0.85"/><circle cx="120.3" cy="46.3" r="3.6" fill="#f3b744" opacity="0.96"/><circle cx="117.2" cy="50.7" r="1.8" fill="#f0b040" opacity="0.79"/><circle cx="82.9" cy="9.8" r="1.5" fill="#ffd978" opacity="0.62"/><circle cx="84.2" cy="18.1" r="0.9" fill="#f6c553" opacity="0.80"/><circle cx="71.4" cy="6.4" r="0.7" fill="#ffd978" opacity="0.33"/><circle cx="74.2" cy="9.7" r="1.5" fill="#f6c553" opacity="0.34"/><circle cx="111.5" cy="14.2" r="1.5" fill="#f6c553" opacity="0.39"/><circle cx="99.9" cy="10.3" r="0.9" fill="#f0b040" opacity="0.45"/><circle cx="85.7" cy="15.2" r="0.5" fill="#f0b040" opacity="0.36"/><circle cx="104.9" cy="3.8" r="0.9" fill="#ffd978" opacity="0.42"/><circle cx="104.5" cy="10.2" r="1.5" fill="#ffe390" opacity="0.74"/><circle cx="114.0" cy="18.6" r="0.5" fill="#f6c553" opacity="0.43"/><circle cx="49.9" cy="60.1" r="0.5" fill="#e9a63a" opacity="0.43"/><circle cx="36.0" cy="71.4" r="0.7" fill="#f3b744" opacity="0.38"/><circle cx="47.3" cy="53.6" r="1.5" fill="#ffd978" opacity="0.75"/><circle cx="44.6" cy="57.9" r="1.5" fill="#e9a63a" opacity="0.53"/><circle cx="47.2" cy="60.5" r="0.7" fill="#ffe390" opacity="0.36"/><circle cx="25.7" cy="59.1" r="0.7" fill="#ffe390" opacity="0.48"/><circle cx="8.7" cy="58.6" r="1.5" fill="#f7bd4a" opacity="0.60"/><circle cx="42.5" cy="74.4" r="0.5" fill="#e9a63a" opacity="0.42"/><circle cx="111.3" cy="12.6" r="0.5" fill="#ffd978" opacity="0.48"/><circle cx="50.9" cy="14.0" r="1.2" fill="#e9a63a" opacity="0.45"/><circle cx="37.1" cy="12.4" r="1.5" fill="#f6c553" opacity="0.51"/><circle cx="51.9" cy="10.4" r="1.5" fill="#f0b040" opacity="0.54"/><circle cx="111.6" cy="24.2" r="0.7" fill="#ffd978" opacity="0.59"/><circle cx="57.6" cy="5.9" r="0.9" fill="#f6c553" opacity="0.53"/><circle cx="73.9" cy="14.0" r="0.5" fill="#ffe390" opacity="0.33"/><circle cx="62.0" cy="15.1" r="0.5" fill="#f7bd4a" opacity="0.67"/><circle cx="116.7" cy="58.6" r="0.9" fill="#f3b744" opacity="0.76"/><circle cx="105.4" cy="64.2" r="1.5" fill="#ffe390" opacity="0.36"/><circle cx="100.1" cy="70.0" r="1.5" fill="#f0b040" opacity="0.57"/><circle cx="117.9" cy="58.0" r="0.9" fill="#f7bd4a" opacity="0.69"/><circle cx="91.4" cy="73.2" r="1.5" fill="#ffd978" opacity="0.51"/><circle cx="120.6" cy="72.6" r="0.9" fill="#f6c553" opacity="0.31"/><circle cx="20.4" cy="11.4" r="0.5" fill="#f7bd4a" opacity="0.32"/><circle cx="12.1" cy="5.9" r="1.2" fill="#ffd978" opacity="0.77"/><circle cx="13.3" cy="12.8" r="0.7" fill="#f6c553" opacity="0.41"/><circle cx="38.4" cy="7.1" r="0.9" fill="#e9a63a" opacity="0.41"/><circle cx="14.4" cy="12.5" r="0.9" fill="#f7bd4a" opacity="0.40"/></g><text x="67" y="42" text-anchor="middle" font-family="Liberation Sans,sans-serif" font-size="5.4" fill="#d9cfc0" opacity="0.5" letter-spacing="0.2">A TALE OF TWO CITIES</text></svg></div>
<div class="abs" id="editor"></div>
<div class="abs" id="toolbar"></div>
<svg class="abs" style="left:375px;top:47px;width:14px;height:11px" viewBox="0 0 14 11"><path d="M1.2 3.6 H3.6 L7 1 V10 L3.6 7.4 H1.2 Z" fill="none" stroke="#1d1d1f" stroke-width="1.2" stroke-linejoin="round"/><path d="M9.2 3.8 L12.4 7.2 M12.4 3.8 L9.2 7.2" stroke="#1d1d1f" stroke-width="1.2" fill="none"/></svg>
<div class="abs vd" style="left:397px"></div>
<div class="t tb" style="left:408.6px;top:45.5px;font-size:8.2px;color:#4a4b52">100%</div>
<svg class="abs" style="left:430px;top:49px;width:8px;height:6px" viewBox="0 0 8 6"><path d="M1 1.2 L4 4.4 L7 1.2" fill="none" stroke="#1d1d1f" stroke-width="1.3"/></svg>
<div class="abs vd" style="left:449px"></div>
<div class="t tb j" style="left:461px">変換</div>
<div class="abs vd" style="left:493px"></div>
<div class="t tb j" style="left:506px">フィルタ</div>
<div class="t tb j" style="left:559px">調整</div>
<div class="abs vd" style="left:589px"></div>
<div class="t tb j" style="left:601px">スピード</div>
<svg class="abs" style="left:982px;top:46px;width:13px;height:13px" viewBox="0 0 13 13"><circle cx="6.5" cy="6.5" r="5" fill="none" stroke="#1d1d1f" stroke-width="1.3"/><path d="M6.5 3.6 V6.8 H9" fill="none" stroke="#1d1d1f" stroke-width="1.2"/></svg>
<svg class="abs" style="left:1004.6px;top:45.6px;width:13px;height:14px" viewBox="0 0 13 14"><path d="M1.6 3.4 H11.4 M4.6 3.2 V1.4 H8.4 V3.2 M2.8 3.6 V12.4 H10.2 V3.6" fill="none" stroke="#1d1d1f" stroke-width="1.4" stroke-linejoin="round"/></svg>
<div class="abs" id="stage"></div>
<div class="abs" id="video"></div>
<div class="t" id="title">F<span>ILM</span> S<span>TUDIO</span> P<span>RESENTS</span></div>
<div class="abs" style="left:392px;top:427.8px;width:610px;height:1.8px;background:#cdd0d4"></div>
<div class="t" style="left:392px;top:439.8px;font-size:7.7px;line-height:10px;color:#33343a">0:00 / 0:05</div>
<svg class="abs" style="left:692px;top:439px;width:11px;height:12px" viewBox="0 0 11 12"><path d="M1 0.8 L10.4 6 L1 11.2 Z" fill="#222"/></svg>
<svg class="abs" style="left:912px;top:438px;width:12px;height:13px" viewBox="0 0 12 13"><rect x="4" y="1" width="4" height="7" rx="2" fill="none" stroke="#222" stroke-width="1.2"/><path d="M1.8 6 C1.8 8.6 3.6 10 6 10 C8.4 10 10.2 8.6 10.2 6 M6 10 V12.2" fill="none" stroke="#222" stroke-width="1.2"/></svg>
<svg class="abs" style="left:937px;top:439px;width:11px;height:11px" viewBox="0 0 11 11"><path d="M4 2 H1.6 V9 H4 M7 2 H9.4 V9 H7 M5.5 0.6 V10.4" fill="none" stroke="#5d5e66" stroke-width="0.9"/></svg>
<div class="t" style="left:963px;top:439px;font-size:8.4px;line-height:11px;color:#33343a">0:05</div>
<svg class="abs" style="left:986px;top:439.8px;width:10.4px;height:9.5px" viewBox="0 0 12 11"><path d="M3.4 3.6 L11 9.4 M3.4 7.4 L11 1.6" stroke="#222" stroke-width="1.4" fill="none"/><circle cx="2.4" cy="2.8" r="1.4" fill="none" stroke="#222" stroke-width="1.1"/><circle cx="2.4" cy="8.2" r="1.4" fill="none" stroke="#222" stroke-width="1.1"/></svg>
<div class="abs" id="timeline"></div>
<div class="abs" style="left:87px;top:498px;width:22px;height:22px;border-radius:50%;background:#f27c2f"></div>
<svg class="abs" style="left:94px;top:503px;width:10px;height:12px" viewBox="0 0 10 12"><path d="M1.4 1.2 L8.8 6 L1.4 10.8 Z" fill="#fff" stroke="#fff" stroke-width="0.8" stroke-linejoin="round"/></svg>
<div class="t" style="left:78px;top:525px;width:40px;text-align:center;font-size:8px;line-height:11px;color:#33343a">0:05</div>
<div class="abs" id="clip"><div class="abs" style="left:25px;top:0;width:42px;height:50px;background:#000"></div>
<div class="t" style="left:25px;top:23px;width:42px;text-align:center;font-size:2px;line-height:3px;color:#fff;letter-spacing:0.1px">FILM STUDIO PRESENTS</div>
<div class="abs" style="left:2px;top:2px;width:14px;height:14px;border-radius:50%;background:#f0873f;color:#fff;font-size:6.6px;line-height:14px;text-align:center">01</div></div>
<div class="t j" style="left:127px;top:534px;font-size:8.4px;line-height:11px;color:#8a8b93">ビデオ</div>
<div class="t" style="left:200px;top:534px;width:20px;text-align:right;font-size:8.4px;line-height:11px;color:#8a8b93">0:05</div>
<div class="abs" style="left:227px;top:478px;width:95px;height:52px;background:#ecedf0"></div>
<div class="abs" style="left:265px;top:494px;width:18px;height:18px;border-radius:50%;background:#fff"></div>
<svg class="abs" style="left:268px;top:497px;width:12px;height:12px" viewBox="0 0 10 10"><path d="M5 0.8 V9.2 M0.8 5 H9.2" stroke="#f0873f" stroke-width="1.1" fill="none"/></svg>
<div class="abs" id="handle"><svg viewBox="0 0 8 54" width="8" height="54"><path d="M6 23.8 L2.8 27 L6 30.2" fill="none" stroke="#4b4c54" stroke-width="1.1"/></svg></div>
</body>
</html>
